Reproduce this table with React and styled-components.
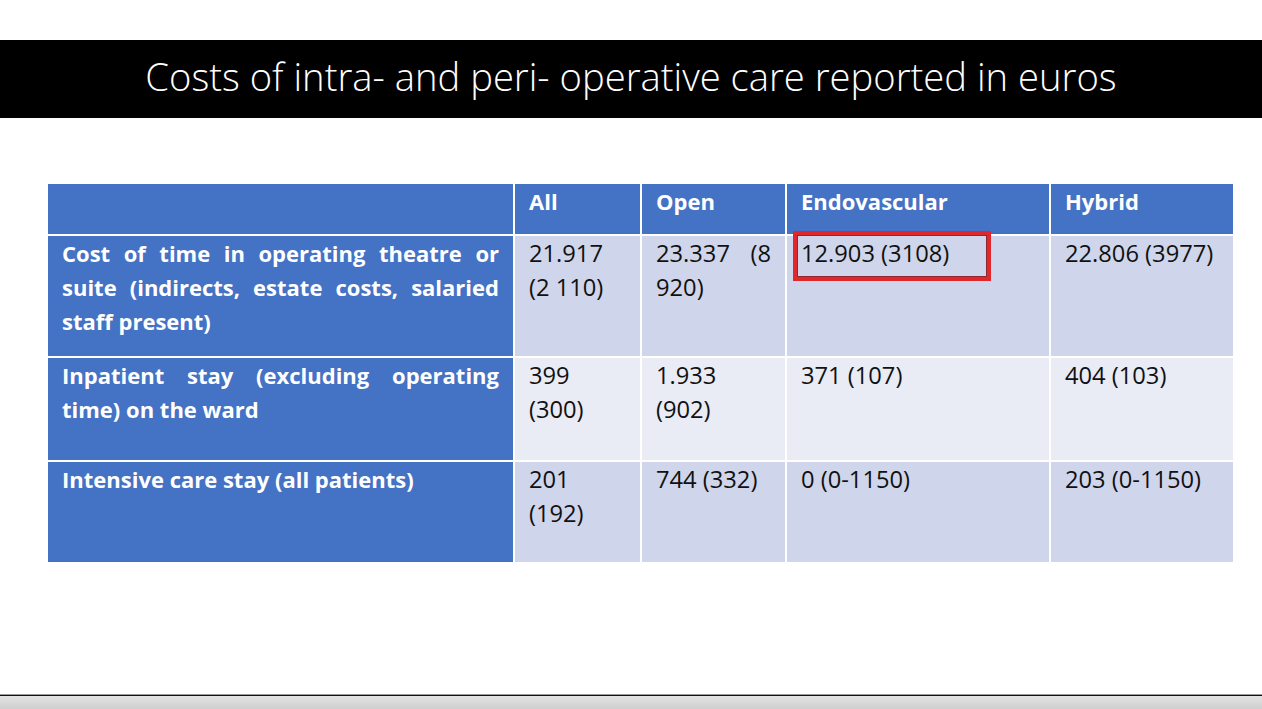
import React from "react";
import styled, { createGlobalStyle } from "styled-components";

const GlobalStyle = createGlobalStyle`
  html, body {
    margin: 0;
    padding: 0;
    background: #ffffff;
  }
  body {
    font-family: "Open Sans", "Liberation Sans", sans-serif;
  }
`;

const columns = ["", "All", "Open", "Endovascular", "Hybrid"];

const rows = [
  {
    label: "Cost of time in operating theatre or suite (indirects, estate costs, salaried staff present)",
    values: ["21.917 (2 110)", "23.337 (8 920)", "12.903 (3108)", "22.806 (3977)"],
    shade: "dark",
    highlight: 2,
  },
  {
    label: "Inpatient stay (excluding operating time) on the ward",
    values: ["399 (300)", "1.933 (902)", "371 (107)", "404 (103)"],
    shade: "light",
  },
  {
    label: "Intensive care stay (all patients)",
    values: ["201 (192)", "744 (332)", "0 (0-1150)", "203 (0-1150)"],
    shade: "dark",
  },
];

const App = () => {
  return (
    <Page>
      <GlobalStyle />
      <TitleBar>
        <Title>Costs of intra- and peri- operative care reported in euros</Title>
      </TitleBar>
      <TableWrap>
        <Table>
          {columns.map((c, i) => (
            <HeadCell key={i}>{c}</HeadCell>
          ))}
          {rows.map((r, ri) => (
            <React.Fragment key={ri}>
              <LabelCell>{r.label}</LabelCell>
              {r.values.map((v, vi) => (
                <DataCell key={vi} $shade={r.shade}>
                  {v}
                  {r.highlight === vi && <Highlight />}
                </DataCell>
              ))}
            </React.Fragment>
          ))}
        </Table>
      </TableWrap>
      <Footer />
    </Page>
  );
};
export default App;

const Page = styled.div`
  width: 1262px;
  height: 709px;
  display: flex;
  flex-direction: column;
  background: #ffffff;
  overflow: hidden;
`;

const TitleBar = styled.div`
  margin-top: 40px;
  height: 78px;
  background: #000000;
  display: flex;
  align-items: center;
  justify-content: center;
`;

const Title = styled.h1`
  margin: 0;
  color: #ffffff;
  font-family: "Open Sans", sans-serif;
  font-weight: 300;
  font-size: 38.2px;
  line-height: 1;
  padding-bottom: 6px;
`;

const TableWrap = styled.div`
  flex: 1;
  padding: 66px 29px 0 48px;
`;

const Table = styled.div`
  display: grid;
  grid-template-columns: 465px 125px 143px 262px 182px;
  grid-template-rows: 50px 120px 102px 100px;
  gap: 2px;
  background: #ffffff;
  font-family: "Open Sans", sans-serif;
  font-size: 22px;
  line-height: 34px;
`;

const HeadCell = styled.div`
  background: #4472c4;
  color: #ffffff;
  font-weight: 700;
  padding: 0 14px;
`;

const LabelCell = styled.div`
  background: #4472c4;
  color: #ffffff;
  font-weight: 700;
  padding: 0 14px;
  text-align: justify;
`;

const DataCell = styled.div`
  position: relative;
  background: ${(p) => (p.$shade === "dark" ? "#cfd5ea" : "#e9ebf5")};
  color: #111111;
  font-size: 23.7px;
  font-weight: 400;
  padding: 0 14px;
  text-align: justify;
`;

const Highlight = styled.span`
  position: absolute;
  left: 6px;
  top: -5px;
  width: 198px;
  height: 50px;
  box-sizing: border-box;
  border: 4px solid #e0282c;
  outline: 1px solid #8a2a2e;
  outline-offset: -5px;
  pointer-events: none;
`;

const Footer = styled.div`
  height: 14px;
  border-top: 1px solid #9a9a9a;
  box-shadow: inset 0 1px 0 #111111;
  background: linear-gradient(#e4e4e4, #cfcfcf);
`;
